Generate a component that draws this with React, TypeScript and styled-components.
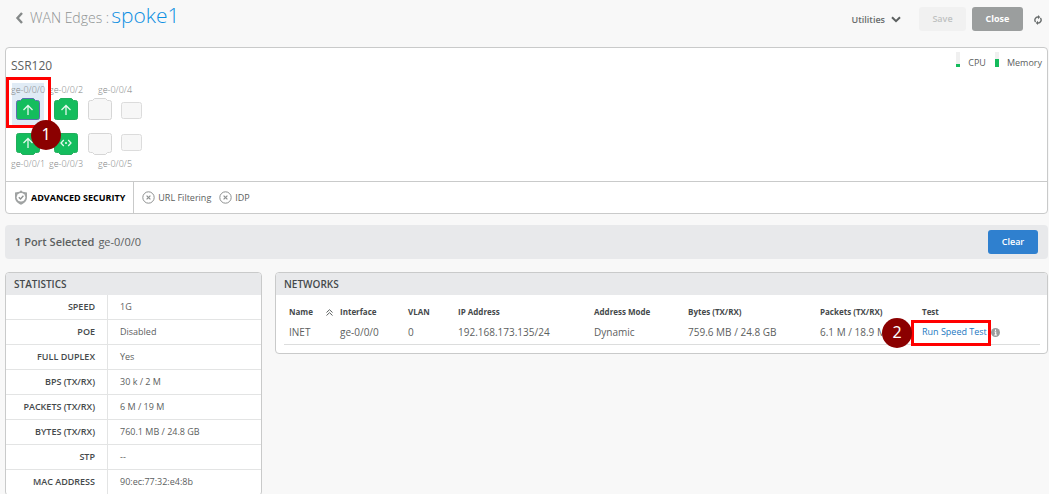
import React from "react";
import styled, { createGlobalStyle } from "styled-components";

const GlobalStyle = createGlobalStyle`
  * { box-sizing: border-box; }
  body {
    margin: 0;
    background: #f8f8f8;
    color: #5c6060;
    font-family: "Open Sans", "Noto Sans", sans-serif;
    font-size: 9px;
    line-height: 12px;
    overflow-x: hidden;
  }
  button { font-family: inherit; cursor: pointer; }
`;

const Page = styled.div`
  padding: 0 1px 0 5px;
`;

const Header = styled.header`
  display: flex;
  align-items: center;
  justify-content: space-between;
  height: 38px;
  margin-bottom: 9px;
`;

const Breadcrumb = styled.nav`
  display: flex;
  align-items: baseline;
  padding-left: 10px;
  margin-bottom: 6px;
`;

const BackLink = styled.a`
  color: #8e9292;
  font-size: 14px;
  line-height: 28px;
  font-weight: 300;
  text-decoration: none;
  white-space: nowrap;
  svg { margin-right: 6px; vertical-align: -1px; }
`;

const Title = styled.h1`
  margin: 0 0 0 2px;
  color: #0d8fe2;
  font-size: 21px;
  line-height: 28px;
  font-weight: 300;
`;

const Actions = styled.div`
  display: flex;
  align-items: center;
  gap: 6px;
`;

const MenuButton = styled.button`
  display: flex;
  align-items: center;
  gap: 6px;
  margin-right: 12px;
  padding: 0;
  border: 0;
  background: none;
  color: #686c6c;
  font-size: 9px;
  font-weight: 600;
`;

const Button = styled.button<{ $tone: "muted" | "grey" | "blue" }>`
  height: 24px;
  width: ${(p) => (p.$tone === "muted" ? 47 : p.$tone === "grey" ? 51 : 50)}px;
  padding: 0;
  border: 0;
  border-radius: 3px;
  font-size: 9px;
  line-height: 12px;
  font-weight: ${(p) => (p.$tone === "grey" ? 700 : 600)};
  color: ${(p) => (p.$tone === "muted" ? "#bfc1c1" : "#fff")};
  background: ${(p) => ({ muted: "#f1f1f1", grey: "#9b9e9e", blue: "#2f80cf" })[p.$tone]};
`;

const IconButton = styled.button`
  display: flex;
  padding: 0;
  margin: 2px 6px 0 5px;
  border: 0;
  background: none;
`;

const Card = styled.section`
  border: 1px solid #c9caca;
  border-radius: 4px;
  background: #fff;
`;

const DeviceTop = styled.div`
  display: flex;
  justify-content: space-between;
  align-items: flex-start;
  height: 133px;
  padding: 4px 5px 0;
`;

const DeviceName = styled.h2`
  margin: 4px 0 7px;
  font-size: 12px;
  line-height: 20px;
  font-weight: 400;
`;

const Meters = styled.div`
  display: flex;
  gap: 9px;
`;

const Meter = styled.div`
  display: flex;
  align-items: center;
  gap: 8px;
  height: 22px;
`;

const MeterTrack = styled.span`
  display: flex;
  align-items: flex-end;
  width: 4px;
  height: 15px;
  margin-bottom: 7px;
  background: #f0f0f0;
`;

const MeterFill = styled.span`
  width: 100%;
  background: #14bb5c;
`;

const Ports = styled.div`
  display: flex;
  gap: 6px;
  margin-left: 1px;
`;

const PortPair = styled.div<{ $wide?: boolean }>`
  width: ${(p) => (p.$wide ? 54 : 32)}px;
`;

const PortCell = styled.div<{ $selected?: boolean; $flip?: boolean }>`
  position: relative;
  display: flex;
  flex-direction: ${(p) => (p.$flip ? "column-reverse" : "column")};
  align-items: center;
  gap: ${(p) => (p.$flip ? 3 : 2)}px;
  height: 42px;
  padding-top: 1px;
  margin-bottom: ${(p) => (p.$flip ? 0 : 7)}px;
  justify-content: ${(p) => (p.$flip ? "flex-end" : "flex-start")};
  background: ${(p) => (p.$selected ? "#e0ebf5" : "transparent")};
`;

const PortLabel = styled.span`
  color: #7e8282;
  font-size: 9px;
  line-height: 12px;
  font-weight: 300;
  white-space: nowrap;
`;

const Sockets = styled.div<{ $flip?: boolean }>`
  display: flex;
  align-items: ${(p) => (p.$flip ? "flex-start" : "flex-end")};
  gap: 8px;
  height: 22px;
`;

const SecurityBar = styled.div`
  display: flex;
  align-items: stretch;
  height: 32px;
  border-top: 1px solid #c9caca;
`;

const SecurityTitle = styled.div`
  display: flex;
  align-items: center;
  gap: 3px;
  padding: 0 8px 0 8px;
  border-right: 1px solid #c9caca;
  color: #000;
  font-size: 9px;
  font-weight: 700;
`;

const SecurityItems = styled.div`
  display: flex;
  align-items: center;
  gap: 8px;
  padding-left: 8px;
`;

const SecurityItem = styled.span`
  display: flex;
  align-items: center;
  gap: 3px;
`;

const SelectionBar = styled.div`
  display: flex;
  align-items: center;
  justify-content: space-between;
  height: 34px;
  margin: 11px 0 13px;
  padding: 0 10px;
  border-radius: 4px;
  background: #e8e9eb;
  font-size: 11px;
  b { font-weight: 600; }
  span { margin-left: 4px; }
`;

const Panels = styled.div`
  display: grid;
  grid-template-columns: 257px 1fr;
  gap: 13px;
  align-items: start;
`;

const Panel = styled(Card)`
  overflow: hidden;
`;

const PanelTitle = styled.h3`
  margin: 0;
  padding: 0 8px;
  background: #e8e9eb;
  color: #45494b;
  font-size: 10px;
  line-height: 22px;
  font-weight: 600;
`;

const StatTable = styled.table`
  width: 100%;
  border-spacing: 0;
  th, td { height: 25px; padding: 0 12px; border-bottom: 1px solid #e3e4e4; }
  th {
    width: 102px;
    border-right: 1px solid #e3e4e4;
    color: #45494b;
    font-weight: 600;
    text-align: right;
    white-space: nowrap;
  }
`;

const NetworkBody = styled.div`
  padding: 7px 8px 8px;
`;

const NetworkTable = styled.table`
  width: 100%;
  table-layout: fixed;
  border-spacing: 0;
  th, td { padding: 0 0 0 5px; text-align: left; white-space: nowrap; }
  th { height: 20px; color: #45494b; font-size: 8px; font-weight: 700; }
  td { height: 23px; padding-bottom: 3px; font-size: 10px; border-bottom: 1px solid #dcdddd; }
`;

const SortHead = styled.span`
  display: flex;
  align-items: center;
  justify-content: space-between;
  padding-right: 2px;
`;

const TestCell = styled.span`
  position: relative;
  display: inline-flex;
  align-items: center;
  gap: 4px;
`;

const TestLink = styled.a`
  color: #2378bf;
  font-size: 9px;
  text-decoration: none;
`;

const Callout = styled.span<{ $x: number; $y: number; $w: number; $h: number }>`
  position: absolute;
  z-index: 2;
  left: ${(p) => p.$x}px;
  top: ${(p) => p.$y}px;
  width: ${(p) => p.$w}px;
  height: ${(p) => p.$h}px;
  border: 3px solid #f00;
  pointer-events: none;
`;

const Step = styled.span<{ $x: number; $y: number }>`
  position: absolute;
  z-index: 3;
  left: ${(p) => p.$x}px;
  top: ${(p) => p.$y}px;
  width: 30px;
  height: 30px;
  border-radius: 50%;
  background: #8b0000;
  color: #fff;
  font: 16px/29px "Noto Sans", "Open Sans", sans-serif;
  text-align: center;
`;

type SocketKind = "up" | "wan" | "empty" | "sfp";

function Socket({ kind, flip, outlined }: { kind: SocketKind; flip?: boolean; outlined?: boolean }) {
  if (kind === "sfp") {
    return (
      <svg width="22" height="19" viewBox="0 0 22 19">
        <rect x="1.500" y="1.500" width="20" height="16" rx="2" fill="#f7f7f7" stroke="#dcdcdc" />
      </svg>
    );
  }
  const live = kind !== "empty";
  const stroke = outlined ? "#5a6fb0" : live ? "#22ad5c" : "#d6d6d6";
  return (
    <svg width="24" height="22" viewBox="0 0 24 22">
      <path
        transform={flip ? "matrix(1 0 0 -1 0 22)" : undefined}
        d="M2.5 2.5H4.5L6.5 .5H17.5L19.5 2.5H21.5Q23.5 2.5 23.5 4.5V19.5Q23.5 21.5 21.5 21.5H2.5Q.5 21.5 .5 19.5V4.5Q.5 2.5 2.5 2.5Z"
        fill={live ? "#14bd5d" : "#f7f7f7"}
        stroke={stroke}
      />
      {kind === "up" && (
        <path d={flip ? "M12 15V5.5M7.5 10L12 5.5L16.5 10" : "M12 17V7.5M7.5 12L12 7.5L16.5 12"} fill="none" stroke="#e5f8ed" strokeWidth="1.3" />
      )}
      {kind === "wan" && (
        <>
          <path d="M9.8 7L7 10L9.8 13M14.2 7L17 10L14.2 13" fill="none" stroke="#e5f8ed" strokeWidth="1.3" />
          <circle cx="12" cy="10" r="1.1" fill="#e5f8ed" />
        </>
      )}
    </svg>
  );
}

function Port({ name, kinds, flip, selected }: { name: string; kinds: SocketKind[]; flip?: boolean; selected?: boolean }) {
  return (
    <PortCell $flip={flip} $selected={selected}>
      <PortLabel>{name}</PortLabel>
      <Sockets $flip={flip}>
        {kinds.map((k) => (
          <Socket key={k} kind={k} flip={flip} outlined={selected} />
        ))}
      </Sockets>
      {selected && (
        <>
          <Callout $x={-6} $y={-6} $w={45} $h={51} />
          <Step $x={19} $y={37}>1</Step>
        </>
      )}
    </PortCell>
  );
}

const CrossCircle = () => (
  <svg width="13" height="13" viewBox="0 0 13 13" fill="none" stroke="#8e9191">
    <circle cx="6.5" cy="6.5" r="5.7" />
    <path d="M4.6 4.6L8.4 8.4M8.4 4.6L4.6 8.4" strokeWidth="1.2" />
  </svg>
);

const stats: [string, string][] = [
  ["SPEED", "1G"],
  ["POE", "Disabled"],
  ["FULL DUPLEX", "Yes"],
  ["BPS (TX/RX)", "30 k / 2 M"],
  ["PACKETS (TX/RX)", "6 M / 19 M"],
  ["BYTES (TX/RX)", "760.1 MB / 24.8 GB"],
  ["STP", "--"],
  ["MAC ADDRESS", "90:ec:77:32:e4:8b"],
];

const columns: [string, number][] = [
  ["Name", 51],
  ["Interface", 68],
  ["VLAN", 50],
  ["IP Address", 136],
  ["Address Mode", 94],
  ["Bytes (TX/RX)", 132],
  ["Packets (TX/RX)", 102],
  ["Test", 123],
];

const network = ["INET", "ge-0/0/0", "0", "192.168.173.135/24", "Dynamic", "759.6 MB / 24.8 GB", "6.1 M / 18.9 M"];

export default function App() {
  return (
    <Page>
      <GlobalStyle />
      <Header>
        <Breadcrumb>
          <BackLink href="#edges">
            <svg width="9" height="12" viewBox="0 0 9 12" fill="none" stroke="#858989" strokeWidth="2.4">
              <path d="M7 1L2.500 6L7 11" />
            </svg>
            WAN Edges :
          </BackLink>
          <Title>spoke1</Title>
        </Breadcrumb>
        <Actions>
          <MenuButton>
            Utilities
            <svg width="10" height="7" viewBox="0 0 10 7" fill="none" stroke="#5c6060" strokeWidth="2">
              <path d="M1 1.2L5 5.2L9 1.2" />
            </svg>
          </MenuButton>
          <Button $tone="muted" disabled>Save</Button>
          <Button $tone="grey">Close</Button>
          <IconButton aria-label="Refresh">
            <svg width="8" height="10" viewBox="0 0 8 10" fill="none" stroke="#686c6c" strokeWidth="1.4">
              <path d="M1.6 7A3 3 0 0 1 4.4 2.1M6.4 3A3 3 0 0 1 3.6 7.9" />
              <path d="M4 0V4.2L6.2 2.1ZM4 5.8V10L1.8 7.9Z" fill="#686c6c" stroke="none" />
            </svg>
          </IconButton>
        </Actions>
      </Header>

      <Card>
        <DeviceTop>
          <div>
            <DeviceName>SSR120</DeviceName>
            <Ports>
              <PortPair>
                <Port name="ge-0/0/0" kinds={["up"]} selected />
                <Port name="ge-0/0/1" kinds={["up"]} flip />
              </PortPair>
              <PortPair>
                <Port name="ge-0/0/2" kinds={["up"]} />
                <Port name="ge-0/0/3" kinds={["wan"]} flip />
              </PortPair>
              <PortPair $wide>
                <Port name="ge-0/0/4" kinds={["empty", "sfp"]} />
                <Port name="ge-0/0/5" kinds={["empty", "sfp"]} flip />
              </PortPair>
            </Ports>
          </div>
          <Meters>
            <Meter>
              <MeterTrack><MeterFill style={{ height: "20%" }} /></MeterTrack>
              CPU
            </Meter>
            <Meter>
              <MeterTrack><MeterFill style={{ height: "53%" }} /></MeterTrack>
              Memory
            </Meter>
          </Meters>
        </DeviceTop>
        <SecurityBar>
          <SecurityTitle>
            <svg width="14" height="15" viewBox="0 0 14 15">
              <path d="M7 .3L8.6 1.7L13 2.4V7.5C13 11 10.2 13.3 7 14.8C3.800 13.3 1 11 1 7.500V2.400L5.400 1.700Z" fill="#a0a3a3" />
              <circle cx="7" cy="7.300" r="4.300" fill="#fff" />
              <path d="M4.800 7.300L6.500 9L9.400 5.700" fill="none" stroke="#8e9191" strokeWidth="1.300" />
            </svg>
            ADVANCED SECURITY
          </SecurityTitle>
          <SecurityItems>
            <SecurityItem><CrossCircle />URL Filtering</SecurityItem>
            <SecurityItem><CrossCircle />IDP</SecurityItem>
          </SecurityItems>
        </SecurityBar>
      </Card>

      <SelectionBar>
        <div><b>1 Port Selected</b><span>ge-0/0/0</span></div>
        <Button $tone="blue">Clear</Button>
      </SelectionBar>

      <Panels>
        <Panel>
          <PanelTitle>STATISTICS</PanelTitle>
          <StatTable>
            <tbody>
              {stats.map(([label, value]) => (
                <tr key={label}>
                  <th scope="row">{label}</th>
                  <td>{value}</td>
                </tr>
              ))}
            </tbody>
          </StatTable>
        </Panel>
        <Panel>
          <PanelTitle>NETWORKS</PanelTitle>
          <NetworkBody>
            <NetworkTable>
              <colgroup>
                {columns.map(([name, width]) => (
                  <col key={name} width={width} />
                ))}
              </colgroup>
              <thead>
                <tr>
                  {columns.map(([name], i) => (
                    <th key={name} scope="col">
                      {i === 0 ? (
                        <SortHead>
                          {name}
                          <svg width="7" height="7" viewBox="0 0 7 7" fill="none" stroke="#5c6060">
                            <path d="M.5 3.500L3.500 .700L6.500 3.500M.5 6.500L3.500 3.700L6.500 6.500" />
                          </svg>
                        </SortHead>
                      ) : (
                        name
                      )}
                    </th>
                  ))}
                </tr>
              </thead>
              <tbody>
                <tr>
                  {network.map((value) => (
                    <td key={value}>{value}</td>
                  ))}
                  <td>
                    <TestCell>
                      <TestLink href="#speed-test">Run Speed Test</TestLink>
                      <svg width="9" height="9" viewBox="0 0 9 9">
                        <circle cx="4.500" cy="4.500" r="4.500" fill="#9a9d9d" />
                        <path d="M4.500 1.500V2.900M3.500 4H4.700V7M3.300 7H5.900" fill="none" stroke="#fff" strokeWidth="1.100" />
                      </svg>
                      <Callout $x={-11} $y={-6} $w={80} $h={26} />
                      <Step $x={-40} $y={-8}>2</Step>
                    </TestCell>
                  </td>
                </tr>
              </tbody>
            </NetworkTable>
          </NetworkBody>
        </Panel>
      </Panels>
    </Page>
  );
}
